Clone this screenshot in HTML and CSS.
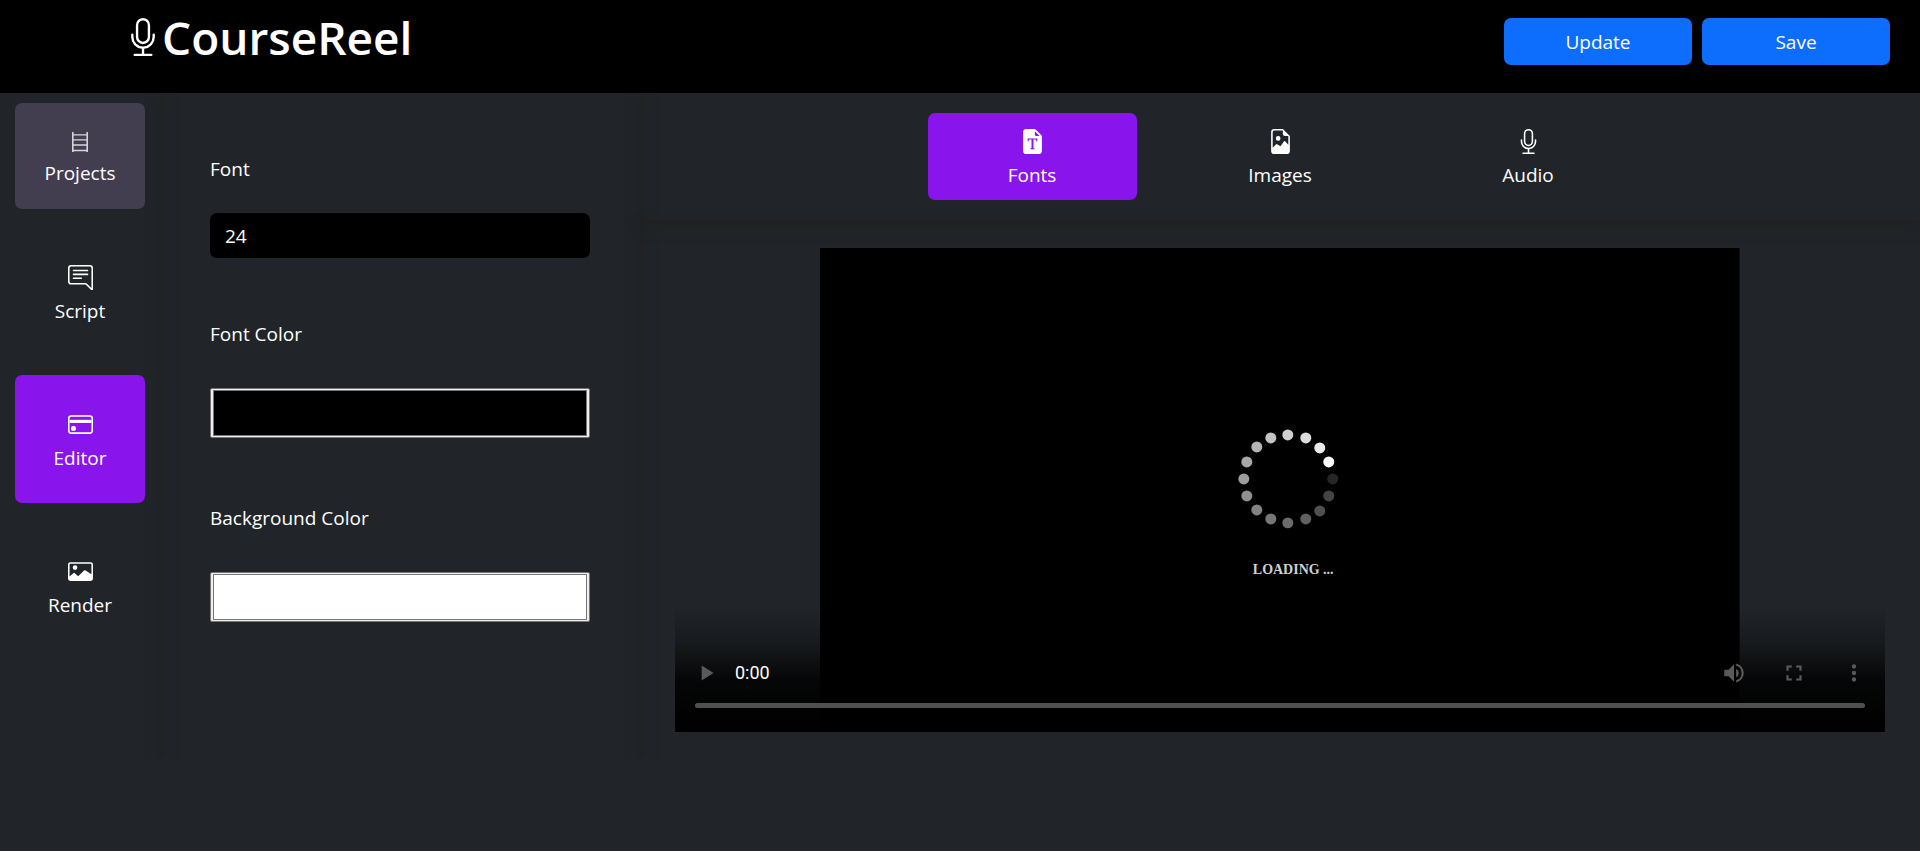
FILE: index.html
```html
<!DOCTYPE html>
<html lang="en">
<head>
<meta charset="utf-8">
<meta name="viewport" content="width=device-width, initial-scale=1">
<title>CourseReel</title>
<link rel="stylesheet" href="styles.css">
</head>
<body>
<header class="topbar">
  <h1 class="brand">
    <svg class="brand-icon" viewBox="0 0 16 16" aria-hidden="true"><path d="M3.5 6.5A.5.5 0 0 1 4 7v1a4 4 0 0 0 8 0V7a.5.5 0 0 1 1 0v1a5 5 0 0 1-4.5 4.975V15h3a.5.5 0 0 1 0 1h-7a.5.5 0 0 1 0-1h3v-2.025A5 5 0 0 1 3 8V7a.5.5 0 0 1 .5-.5z"/><path d="M10 8a2 2 0 1 1-4 0V3a2 2 0 1 1 4 0v5zM8 0a3 3 0 0 0-3 3v5a3 3 0 0 0 6 0V3a3 3 0 0 0-3-3z"/></svg>
    <span>CourseReel</span>
  </h1>
  <div class="actions">
    <button type="button" class="btn">Update</button>
    <button type="button" class="btn">Save</button>
  </div>
</header>
<main class="workspace">
  <nav class="sidebar" aria-label="Sections">
    <button type="button" class="nav-item nav-item-projects">
      <svg class="icon-ladder" viewBox="0 0 16 20" aria-hidden="true"><path d="M0 0h1.600v2.200h12.800V0H16v20h-1.600v-.8H1.600v.8H0zM1.600 3.600v3.600h12.800V3.600zm0 5v3.700h12.800V8.600zm0 5.100v4.100h12.800v-4.100z" fill-rule="evenodd"/></svg>
      <span>Projects</span>
    </button>
    <button type="button" class="nav-item">
      <svg class="icon" viewBox="0 0 16 16" aria-hidden="true"><path d="M14 1a1 1 0 0 1 1 1v12.793l-2.854-2.853a1.5 1.5 0 0 0-1.060-.44H2a1 1 0 0 1-1-1V2a1 1 0 0 1 1-1h12zM2 0a2 2 0 0 0-2 2v8.5a2 2 0 0 0 2 2h9.086a.5.5 0 0 1 .353.146l3.707 3.708A.5.5 0 0 0 16 16V2a2 2 0 0 0-2-2H2z"/><path d="M3 3.5a.5.5 0 0 1 .5-.5h9a.5.5 0 0 1 0 1h-9a.5.5 0 0 1-.5-.5zM3 6a.5.5 0 0 1 .5-.5h9a.5.5 0 0 1 0 1h-9A.5.5 0 0 1 3 6zm0 2.500a.5.5 0 0 1 .5-.5h5a.5.5 0 0 1 0 1h-5a.5.5 0 0 1-.5-.5z"/></svg>
      <span>Script</span>
    </button>
    <button type="button" class="nav-item nav-item-active" aria-current="page">
      <svg class="icon" viewBox="0 0 16 16" aria-hidden="true"><path d="M14 3a1 1 0 0 1 1 1v8a1 1 0 0 1-1 1H2a1 1 0 0 1-1-1V4a1 1 0 0 1 1-1h12zM2 2a2 2 0 0 0-2 2v8a2 2 0 0 0 2 2h12a2 2 0 0 0 2-2V4a2 2 0 0 0-2-2H2z"/><path d="M1 5h14v2H1z"/><rect x="2" y="9" width="3" height="3" rx="1"/></svg>
      <span>Editor</span>
    </button>
    <button type="button" class="nav-item">
      <svg class="icon" viewBox="0 0 16 16" aria-hidden="true"><path fill-rule="evenodd" d="M1.500 2h13A1.500 1.500 0 0 1 16 3.500v9a1.500 1.500 0 0 1-1.500 1.500h-13A1.500 1.500 0 0 1 0 12.500v-9A1.500 1.500 0 0 1 1.500 2zm0 1a.5.5 0 0 0-.5.5v7.700l2.600-2.300a.5.5 0 0 1 .6 0L6.500 11l3.800-3.600a.8.8 0 0 1 1 0L15 9.800V3.500a.5.5 0 0 0-.5-.5zM4.500 4a1.500 1.500 0 1 1 0 3 1.500 1.500 0 0 1 0-3z"/></svg>
      <span>Render</span>
    </button>
  </nav>
  <form class="settings">
    <div class="field">
      <label for="font-size">Font</label>
      <input class="text-input" id="font-size" type="text" value="24">
    </div>
    <div class="field field-color">
      <label for="font-color">Font Color</label>
      <input class="color-input" id="font-color" type="color" value="#000000">
    </div>
    <div class="field field-color">
      <label for="background-color">Background Color</label>
      <input class="color-input" id="background-color" type="color" value="#ffffff">
    </div>
  </form>
  <section class="stage">
    <div class="tabs">
      <button type="button" class="tab tab-active">
        <svg class="icon" viewBox="0 0 16 16" aria-hidden="true"><path fill-rule="evenodd" d="M4 0h5.293A1 1 0 0 1 10 .293L13.707 4a1 1 0 0 1 .293.707V14a2 2 0 0 1-2 2H4a2 2 0 0 1-2-2V2a2 2 0 0 1 2-2zm5.500 1.500v2a1 1 0 0 0 1 1h2zM4.943 6l-.057 2h.5c.18-1.096.356-1.192 1.694-1.235l.293-.01v5.090c0 .47-.1.582-.898.655v.5h3.050v-.5c-.8-.073-.9-.184-.9-.654V6.755l.3.010c1.340.043 1.510.140 1.690 1.235h.5l-.057-2z"/></svg>
        <span>Fonts</span>
      </button>
      <button type="button" class="tab">
        <svg class="icon" viewBox="0 0 16 16" aria-hidden="true"><path fill-rule="evenodd" d="M4 0h5.500L14 4.500V14a2 2 0 0 1-2 2H4a2 2 0 0 1-2-2V2a2 2 0 0 1 2-2zm0 1a1 1 0 0 0-1 1v10l2.224-2.224a.5.5 0 0 1 .61-.075L8 11l2.157-3.020a.5.5 0 0 1 .76-.063L13 10V4.500h-2A1.500 1.500 0 0 1 9.500 3V1zm2.500 3.500a1.500 1.500 0 1 1 0 3 1.500 1.500 0 0 1 0-3z"/></svg>
        <span>Images</span>
      </button>
      <button type="button" class="tab">
        <svg class="icon" viewBox="0 0 16 16" aria-hidden="true"><path d="M3.500 6.500A.5.5 0 0 1 4 7v1a4 4 0 0 0 8 0V7a.5.5 0 0 1 1 0v1a5 5 0 0 1-4.500 4.975V15h3a.5.5 0 0 1 0 1h-7a.5.5 0 0 1 0-1h3v-2.025A5 5 0 0 1 3 8V7a.5.5 0 0 1 .5-.5z"/><path d="M10 8a2 2 0 1 1-4 0V3a2 2 0 1 1 4 0v5zM8 0a3 3 0 0 0-3 3v5a3 3 0 0 0 6 0V3a3 3 0 0 0-3-3z"/></svg>
        <span>Audio</span>
      </button>
    </div>
    <div class="preview">
      <div class="player">
        <svg class="frame" viewBox="0 0 920 484" role="img" aria-label="Loading">
          <rect width="920" height="484" fill="#000"/>
          <g>
            <circle cx="513" cy="231" r="5.500" fill="#262626"/>
            <circle cx="509" cy="248" r="5.500" fill="#444"/>
            <circle cx="500" cy="263" r="5.500" fill="#515151"/>
            <circle cx="486" cy="271" r="5.500" fill="#606060"/>
            <circle cx="468" cy="275" r="5.500" fill="#6b6b6b"/>
            <circle cx="451" cy="271" r="5.500" fill="#777"/>
            <circle cx="437" cy="262" r="5.500" fill="#838383"/>
            <circle cx="427" cy="248" r="5.500" fill="#909090"/>
            <circle cx="424" cy="231" r="5.500" fill="#9c9c9c"/>
            <circle cx="427" cy="214" r="5.500" fill="#a8a8a8"/>
            <circle cx="437" cy="199" r="5.500" fill="#b4b4b4"/>
            <circle cx="451" cy="190" r="5.500" fill="#c2c2c2"/>
            <circle cx="468" cy="187" r="5.500" fill="#d0d0d0"/>
            <circle cx="486" cy="190" r="5.500" fill="#dcdcdc"/>
            <circle cx="500" cy="200" r="5.500" fill="#eaeaea"/>
            <circle cx="509" cy="214" r="5.500" fill="#fafafa"/>
          </g>
          <text class="loading" x="433" y="326">LOADING ...</text>
        </svg>
        <div class="controls">
          <div class="control-row">
            <button type="button" class="control" aria-label="Play"><svg viewBox="0 0 24 24"><path d="M8 5v14l11-7z"/></svg></button>
            <span class="time">0:00</span>
            <div class="control-group">
              <button type="button" class="control" aria-label="Mute"><svg viewBox="0 0 24 24"><path d="M3 9v6h4l5 5V4L7 9H3zm13.500 3A4.500 4.500 0 0 0 14 7.970v8.050A4.500 4.500 0 0 0 16.500 12zM14 3.230v2.060a7 7 0 0 1 0 13.420v2.060a9 9 0 0 0 0-17.540z"/></svg></button>
              <button type="button" class="control" aria-label="Full screen"><svg viewBox="0 0 24 24"><path d="M7 14H5v5h5v-2H7v-3zm-2-4h2V7h3V5H5v5zm12 7h-3v2h5v-5h-2v3zM14 5v2h3v3h2V5h-5z"/></svg></button>
              <button type="button" class="control" aria-label="More options"><svg viewBox="0 0 24 24"><path d="M12 8a2 2 0 1 0 0-4 2 2 0 0 0 0 4zm0 2a2 2 0 1 0 0 4 2 2 0 0 0 0-4zm0 6a2 2 0 1 0 0 4 2 2 0 0 0 0-4z"/></svg></button>
            </div>
          </div>
          <div class="timeline"></div>
        </div>
      </div>
    </div>
  </section>
</main>
</body>
</html>
```

FILE: styles.css
```css
* {
  box-sizing: border-box;
}

body {
  margin: 0;
  background: #212529;
  color: #fff;
  font-family: "Open Sans", "Noto Sans", sans-serif;
  font-size: 19px;
  line-height: 30px;
}

button,
input {
  font: inherit;
  color: inherit;
}

button {
  border: 0;
  padding: 0;
  background: none;
  cursor: pointer;
}

svg {
  display: block;
  fill: currentColor;
}

.topbar {
  position: relative;
  z-index: 1;
  display: flex;
  align-items: flex-start;
  justify-content: space-between;
  padding: 8px 30px 25px 124px;
  background: #000;
}

.brand {
  display: flex;
  align-items: center;
  margin: 0;
  font-size: 46px;
  font-weight: 600;
  line-height: 58px;
}

.brand-icon {
  width: 38px;
  height: 38px;
}

.actions {
  display: flex;
  gap: 10px;
  padding: 10px 0 3px;
}

.btn {
  width: 188px;
  height: 47px;
  border-radius: 7px;
  background: #0d6efd;
}

.workspace {
  display: grid;
  grid-template-columns: 160px 477px 1fr;
  gap: 3px;
}

.sidebar,
.settings,
.tabs,
.preview {
  box-shadow: 0 5px 12px 1px #222121;
}

.sidebar {
  display: flex;
  flex-direction: column;
  gap: 19px;
  padding: 10px 15px;
}

.nav-item {
  display: flex;
  flex-direction: column;
  align-items: center;
  gap: 6px;
  padding: 37px 0 30px;
  border-radius: 7px;
}

.nav-item-projects {
  padding: 29px 0 21px;
  background: #433d50;
}

.nav-item-active,
.tab-active {
  background: #8a14ec;
}

.icon {
  width: 25px;
  height: 25px;
}

.icon-ladder {
  width: 16px;
  height: 20px;
  color: #d5d4d8;
}

.settings {
  display: flex;
  flex-direction: column;
  gap: 61px;
  padding: 61px 50px 61px 47px;
}

.field {
  display: flex;
  flex-direction: column;
  gap: 29px;
}

.field-color {
  gap: 39px;
}

.field-color + .field-color {
  margin-top: 4px;
}

.text-input {
  width: 100%;
  height: 45px;
  padding: 0 15px;
  border: 0;
  border-radius: 7px;
  background: #000;
}

.color-input {
  width: 100%;
  height: 50px;
  padding: 1px 2px;
  border: 1px solid #767676;
  border-radius: 2px;
  background: #efefef;
}

.color-input::-webkit-color-swatch-wrapper {
  padding: 0;
}

.color-input::-webkit-color-swatch {
  border: 1px solid #777;
}

.stage {
  display: flex;
  flex-direction: column;
  gap: 3px;
}

.tabs {
  display: flex;
  justify-content: center;
  gap: 39px;
  padding: 20px 20px 20px 17px;
}

.tab {
  display: flex;
  flex-direction: column;
  align-items: center;
  gap: 6px;
  width: 209px;
  padding: 16px 0 10px;
  border-radius: 7px;
}

.preview {
  flex: 1;
  padding: 25px 35px 27px 32px;
}

.player {
  display: grid;
  grid-template-columns: 1fr;
}

.frame {
  grid-area: 1 / 1;
  justify-self: center;
  width: 76%;
}

.loading {
  fill: #d0d0d0;
  font-family: "Liberation Serif", serif;
  font-size: 14px;
  font-weight: 700;
}

.controls {
  grid-area: 1 / 1;
  align-self: end;
  padding: 43px 0 24px;
  background: linear-gradient(to bottom, transparent, rgba(0, 0, 0, 0.3) 30%, rgba(0, 0, 0, 0.85) 60%, #000);
}

.control-row {
  display: flex;
  align-items: center;
  padding: 0 18px;
}

.control {
  color: #5a5a5a;
  padding: 12px 0;
}

.control svg {
  width: 26px;
  height: 26px;
}

.time {
  margin-left: 16px;
  font-family: Roboto, sans-serif;
  font-size: 18px;
}

.control-group {
  display: flex;
  gap: 34px;
  margin-left: auto;
}

.timeline {
  height: 5px;
  margin: 5px 20px 0;
  border-radius: 3px;
  background: #505050;
}
```
